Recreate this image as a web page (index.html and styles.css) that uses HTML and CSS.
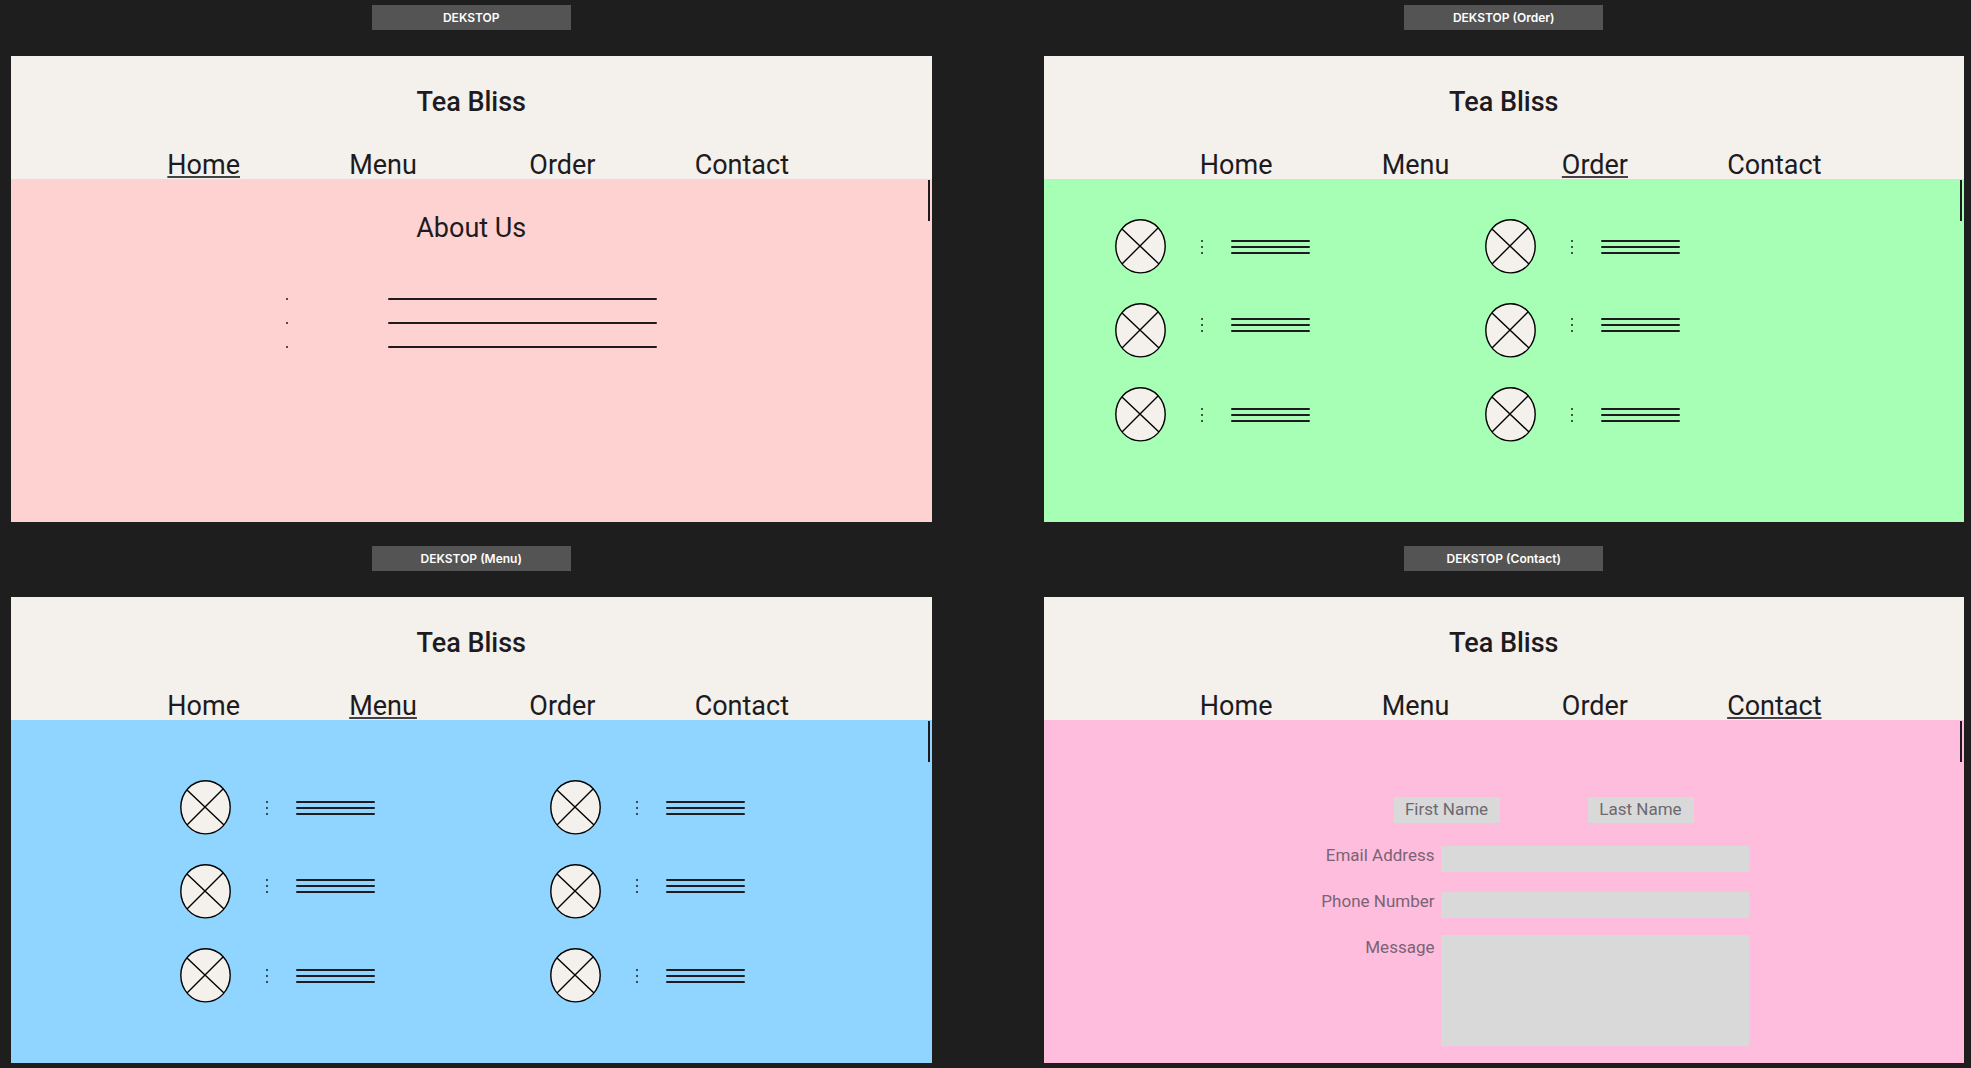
FILE: index.html
```html
<!DOCTYPE html>
<html lang="en">
<head>
<meta charset="utf-8">
<meta name="viewport" content="width=device-width, initial-scale=1">
<title>Tea Bliss wireframes</title>
<link rel="stylesheet" href="styles.css">
</head>
<body>
<svg class="defs" aria-hidden="true">
  <symbol id="thumb" viewBox="0 0 51 55">
    <ellipse cx="25.5" cy="27.3" rx="24.7" ry="26.6"/>
    <path d="M7 10 44 45M43 9 7 45"/>
  </symbol>
</svg>
<main class="board">
  <section class="frame">
    <h2 class="tag">DEKSTOP</h2>
    <div class="screen">
      <header class="header">
        <h1 class="brand">Tea Bliss</h1>
        <nav class="nav"><a class="current" href="#">Home</a><a href="#">Menu</a><a href="#">Order</a><a href="#">Contact</a></nav>
      </header>
      <div class="content home">
        <h3 class="about">About Us</h3>
        <ul class="lines wide"><li></li><li></li><li></li></ul>
        <span class="scroll"></span>
      </div>
    </div>
  </section>

  <section class="frame">
    <h2 class="tag">DEKSTOP (Order)</h2>
    <div class="screen">
      <header class="header">
        <h1 class="brand">Tea Bliss</h1>
        <nav class="nav"><a href="#">Home</a><a href="#">Menu</a><a class="current" href="#">Order</a><a href="#">Contact</a></nav>
      </header>
      <div class="content order">
        <div class="items">
          <div class="item"><svg class="thumb"><use href="#thumb"/></svg><ul class="lines"><li></li><li></li><li></li></ul></div>
          <div class="item"><svg class="thumb"><use href="#thumb"/></svg><ul class="lines"><li></li><li></li><li></li></ul></div>
          <div class="item raised"><svg class="thumb"><use href="#thumb"/></svg><ul class="lines"><li></li><li></li><li></li></ul></div>
          <div class="item raised"><svg class="thumb"><use href="#thumb"/></svg><ul class="lines"><li></li><li></li><li></li></ul></div>
          <div class="item"><svg class="thumb"><use href="#thumb"/></svg><ul class="lines"><li></li><li></li><li></li></ul></div>
          <div class="item"><svg class="thumb"><use href="#thumb"/></svg><ul class="lines"><li></li><li></li><li></li></ul></div>
        </div>
        <span class="scroll"></span>
      </div>
    </div>
  </section>

  <section class="frame">
    <h2 class="tag">DEKSTOP (Menu)</h2>
    <div class="screen">
      <header class="header">
        <h1 class="brand">Tea Bliss</h1>
        <nav class="nav"><a href="#">Home</a><a class="current" href="#">Menu</a><a href="#">Order</a><a href="#">Contact</a></nav>
      </header>
      <div class="content menu">
        <div class="items">
          <div class="item"><svg class="thumb"><use href="#thumb"/></svg><ul class="lines"><li></li><li></li><li></li></ul></div>
          <div class="item"><svg class="thumb"><use href="#thumb"/></svg><ul class="lines"><li></li><li></li><li></li></ul></div>
          <div class="item raised"><svg class="thumb"><use href="#thumb"/></svg><ul class="lines"><li></li><li></li><li></li></ul></div>
          <div class="item raised"><svg class="thumb"><use href="#thumb"/></svg><ul class="lines"><li></li><li></li><li></li></ul></div>
          <div class="item"><svg class="thumb"><use href="#thumb"/></svg><ul class="lines"><li></li><li></li><li></li></ul></div>
          <div class="item"><svg class="thumb"><use href="#thumb"/></svg><ul class="lines"><li></li><li></li><li></li></ul></div>
        </div>
        <span class="scroll"></span>
      </div>
    </div>
  </section>

  <section class="frame">
    <h2 class="tag">DEKSTOP (Contact)</h2>
    <div class="screen">
      <header class="header">
        <h1 class="brand">Tea Bliss</h1>
        <nav class="nav"><a href="#">Home</a><a href="#">Menu</a><a href="#">Order</a><a class="current" href="#">Contact</a></nav>
      </header>
      <div class="content contact">
        <form class="form">
          <div class="names">
            <input class="field name" type="text" placeholder="First Name" aria-label="First Name">
            <input class="field name" type="text" placeholder="Last Name" aria-label="Last Name">
          </div>
          <div class="row email"><label for="email">Email Address</label><input class="field" id="email" type="email"></div>
          <div class="row phone"><label for="phone">Phone Number</label><input class="field" id="phone" type="tel"></div>
          <div class="row message"><label for="message">Message</label><textarea class="field" id="message"></textarea></div>
        </form>
        <span class="scroll"></span>
      </div>
    </div>
  </section>
</main>
</body>
</html>
```

FILE: styles.css
```css
* {
  box-sizing: border-box;
}

body {
  margin: 0;
  background: #1e1e1e;
  color: #1d1b20;
  font-family: Roboto, "Liberation Sans", sans-serif;
}

.defs {
  position: absolute;
  width: 0;
  height: 0;
}

.board {
  display: grid;
  grid-template-columns: 1fr 1fr;
  gap: 24px 112px;
  padding: 5px 7px 5px 11px;
}

.frame {
  display: flex;
  flex-direction: column;
  gap: 26px;
}

.tag {
  align-self: center;
  width: 199px;
  margin: 0;
  background: #545454;
  color: #fff;
  font-family: Inter, "Liberation Sans", sans-serif;
  font-size: 12px;
  font-weight: 600;
  line-height: 25px;
  text-align: center;
}

.screen {
  display: flex;
  flex-direction: column;
}

.header {
  height: 123px;
  padding-top: 30px;
  background: #f4f0eb;
}

.brand,
.about {
  margin: 0;
  font-size: 27px;
  line-height: 32px;
  text-align: center;
}

.brand {
  font-weight: 500;
}

.about {
  font-weight: 400;
}

.nav {
  display: grid;
  grid-template-columns: repeat(4, 1fr);
  justify-items: center;
  margin-top: 31px;
  padding: 0 100px 0 103px;
}

.nav a {
  color: inherit;
  font-size: 27px;
  line-height: 32px;
  text-decoration: none;
}

.nav .current {
  text-decoration: underline 2px #444247;
  text-underline-offset: 2px;
}

.content {
  position: relative;
  height: 343px;
}

.home {
  padding-top: 33px;
  background: #ffd2d2;
}

.order {
  padding: 40px 0 0 71px;
  background: #a7ffb5;
}

.menu {
  padding: 60px 0 0 169px;
  background: #8fd5ff;
}

.contact {
  padding: 77px 0 0 271px;
  background: #ffbddd;
}

.scroll {
  position: absolute;
  top: 1px;
  right: 2px;
  width: 2px;
  height: 41px;
  background: #1d1b20;
}

.items {
  display: grid;
  grid-template-columns: 195px 195px;
  gap: 29px 175px;
}

.item {
  display: flex;
  align-items: center;
  gap: 35px;
}

.thumb {
  width: 51px;
  height: 55px;
  fill: #f4f0eb;
  stroke: #000;
  stroke-width: 1.4;
}

.lines {
  display: flex;
  flex-direction: column;
  gap: 4px;
  margin: 0;
  padding: 0;
  list-style: none;
}

.lines li {
  display: grid;
  grid-template-columns: 2px 79px;
  gap: 28px;
  height: 2px;
}

.lines li::before,
.lines li::after {
  content: "";
  background: #1d1b20;
  border-radius: 1px;
}

.raised .lines {
  padding-bottom: 11px;
}

.wide {
  gap: 22px;
  margin-top: 54px;
  padding-left: 275px;
}

.wide li {
  grid-template-columns: 2px 269px;
  gap: 100px;
}

.form {
  width: 434px;
}

.names {
  display: flex;
  gap: 88px;
  padding-left: 79px;
  margin-bottom: 23px;
}

.row {
  display: grid;
  grid-template-columns: 120px 1fr;
  gap: 6px;
}

.row label {
  color: #7a6375;
  font-size: 17px;
  line-height: 18px;
  text-align: right;
}

.email {
  margin-bottom: 20px;
}

.phone {
  margin-bottom: 17px;
}

.message label {
  padding-top: 3px;
}

.field {
  width: 100%;
  height: 26px;
  margin: 0;
  padding: 0;
  border: 0;
  border-radius: 0;
  background: #d9d9d9;
  color: #6c6971;
  font-family: inherit;
  font-size: 17px;
  resize: none;
}

.name {
  width: 106px;
  padding-bottom: 2px;
  text-align: center;
}

.name::placeholder {
  color: #6c6971;
}

.message .field {
  height: 111px;
}
```
